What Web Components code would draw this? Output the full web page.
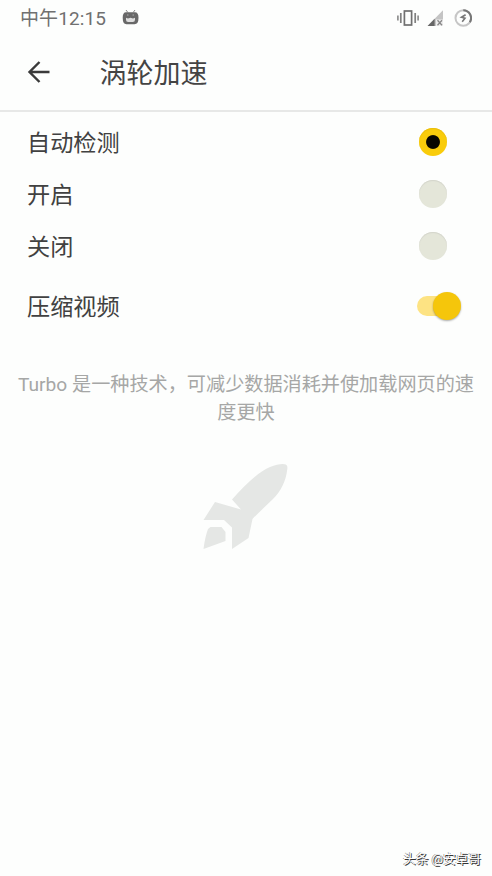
<!DOCTYPE html>
<html lang="zh-CN"><head><meta charset="utf-8"><title>涡轮加速</title>
<style>
html,body{margin:0;height:100%;background:#fdfefd;overflow:hidden}
body{font-family:Roboto,"Noto Sans CJK SC",sans-serif;color:#3c3c3c}
</style></head><body>
<turbo-screen></turbo-screen>
<script>
const define=(name,html)=>customElements.define(name,class extends HTMLElement{
  constructor(){super();this.attachShadow({mode:'open'}).innerHTML=html;}
});
define('status-bar',`<style>
:host{display:flex;height:36px;box-sizing:border-box;padding:0 20px;align-items:center;color:#707070;font-size:19px;line-height:34px}
.t{width:102px;white-space:nowrap;letter-spacing:.1px;padding-top:2px}.s{flex:1}svg{display:block;flex:none}
</style><span class="t"><slot></slot></span>
<svg width="18" height="18" viewBox="0 0 18 18"><path d="M4 1l1.8 2.4M13 1l-1.8 2.4" stroke="#888" stroke-width="1"/><path d="M4 3.2h9q3.5 0 3.5 5.5 0 6.5-4 6.5h-8q-3.8 0-3.8-6.5Q.7 3.2 4 3.2z" fill="#686868"/><path d="M4 8.8l2 .7 2.5-.7 2.5.7 2-.7v2q0 2.2-2.3 2.2H6.2Q4 13 4 10.8z" fill="#ddd"/><path d="M5 6h1.5M10.5 6H12" stroke="#aaa"/></svg>
<span class="s"></span>
<svg width="75" height="20" viewBox="0 0 75 20" fill="none"><rect x="7.4" y="3" width="7.2" height="14" stroke="#707070" stroke-width="1.7"/><path d="M3.8 5v10M18.2 5v10" stroke="#808080" stroke-width="1.7"/><path d="M.9 7.4v5M21.1 7.4v5" stroke="#808080" stroke-width="1.5"/><path d="M46 2.2V18H30.5z" fill="#c4c4c4"/><path d="M37.6 10.8V18h-7z" fill="#666"/><path d="M39 11.5h7V18h-7z" fill="#eee"/><path d="M40.5 12.3l4.5 5M45 12.3l-4.5 5" stroke="#888" stroke-width="1.3"/><circle cx="66.3" cy="10" r="7.8" stroke="#c6c6c6" stroke-width="2"/><path d="M66.3 2.2a7.8 7.8 0 0 1 6.5 12" stroke="#777" stroke-width="2"/><path d="M68.6 6.7l-4.2 2.6 3.6 1-2.8 3.5" stroke="#777" stroke-width="1.6"/></svg>`);
define('app-bar',`<style>
:host{display:flex;height:76px;box-sizing:border-box;align-items:center;padding:0 0 2px 27px;border-bottom:2px solid #e7e8e7;color:#444}
h1{margin:0 0 0 48.5px;padding-top:3px;font-size:27px;font-weight:400;line-height:40px}svg{display:block}
</style><svg width="24" height="24" viewBox="0 0 24 24" fill="none" stroke="#3a3a3a" stroke-width="2.4"><path d="M12.5 2L2.5 12l10 10M2.5 12H22.5"/></svg><h1><slot></slot></h1>`);
define('radio-dot',`<style>
:host{display:block;box-sizing:border-box;width:28px;height:28px;border-radius:50%;background:#e4e6d9;box-shadow:inset 0 1px 1px #d3d4cb}
:host([checked]){background:radial-gradient(circle,#080700 6.4px,#f9cc0b 7.4px);box-shadow:inset 0 1px 1px #e8bd0b}
</style>`);
define('toggle-switch',`<style>
:host{display:flex;align-items:center;width:44px;height:30px}
.track{width:30px;height:20px;border-radius:10px;background:#fde383;flex:none}
.knob{width:28px;height:28px;border-radius:50%;background:#f5c60b;margin-left:-14px;box-shadow:0 1px 2px #0005;flex:none}
</style><span class="track"></span><span class="knob"></span>`);
define('setting-row',`<style>
:host{display:flex;height:52px;align-items:center;justify-content:space-between;box-sizing:border-box;padding:0 45px 0 27px;font-size:23.2px;line-height:34px;color:#414141}
:host([wide]){padding-right:31px;height:68px}
span{padding-top:1px}
</style><span><slot></slot></span><slot name="control"></slot>`);
define('turbo-note',`<style>
:host{display:block;margin-top:31px;padding:0 16px;text-align:center;font-size:19.15px;line-height:27.5px;color:#a6a7a6}
svg{display:block;margin:38px auto 0}
</style><slot></slot>
<svg width="86" height="86" viewBox="204 464 86 86" fill="#e5e7e5"><path d="M233 499.5C247 484 258 473 271 467Q280 463.5 285.5 464.2Q289 464.7 288.3 469C287 481 282 491 274 499C267 506 260 512 253.5 519L249.5 538L233 549V527.5L225 520H204.5L216 502L242 509.5Z"/><path d="M211.5 527H222.5L226.5 532V541L204.5 549Q206 537 209 529Z"/></svg>`);
define('author-mark',`<style>
:host{position:absolute;right:11px;bottom:7px;font-size:12.7px;line-height:20px;white-space:nowrap;color:#fff;text-shadow:1px 1px 0 #333,-.5px -.5px 0 #666}
</style><slot></slot>`);
define('turbo-screen',`<style>
:host{display:block;position:relative;height:876px;overflow:hidden}
main{padding-top:4px}
</style><status-bar>中午12:15</status-bar><app-bar>涡轮加速</app-bar>
<main><setting-row>自动检测<radio-dot slot="control" checked></radio-dot></setting-row>
<setting-row>开启<radio-dot slot="control"></radio-dot></setting-row>
<setting-row>关闭<radio-dot slot="control"></radio-dot></setting-row>
<setting-row wide>压缩视频<toggle-switch slot="control"></toggle-switch></setting-row>
<turbo-note>Turbo 是一种技术，可减少数据消耗并使加载网页的速度更快</turbo-note></main>
<author-mark>头条 @安卓哥</author-mark>`);
</script></body></html>
